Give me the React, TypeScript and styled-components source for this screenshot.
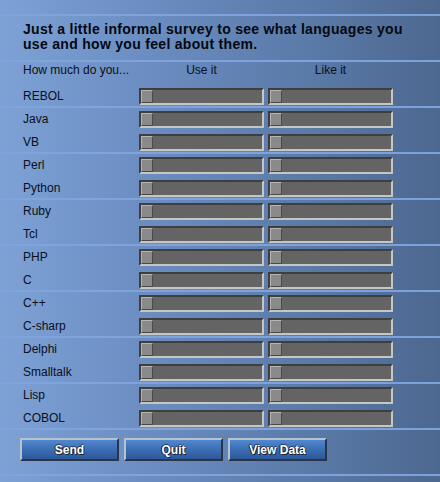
import React from "react";
import styled, { createGlobalStyle } from "styled-components";

const Global = createGlobalStyle`
  html, body { margin: 0; padding: 0; }
  body { width: 440px; height: 482px; overflow: hidden; }
`;

const Page = styled.div`
  box-sizing: border-box;
  width: 440px;
  height: 482px;
  padding: 22px 0 0 23px;
  font-family: "Liberation Sans", Arial, sans-serif;
  color: #0a0f1a;
  background:
    repeating-linear-gradient(
      to bottom,
      transparent 0px,
      transparent 14px,
      rgba(128, 164, 222, 0.95) 14px,
      rgba(128, 164, 222, 0.95) 16px,
      transparent 16px,
      transparent 46px
    ),
    linear-gradient(to right, #7ea2d6 0%, #6a8cc0 35%, #5a7aa8 70%, #4d6890 100%);
`;

const Title = styled.h1`
  margin: 0;
  font-size: 14px;
  line-height: 15px;
  font-weight: bold;
  letter-spacing: 0.3px;
  color: #05080f;
`;

const Grid = styled.div`
  display: grid;
  grid-template-columns: 112px 125px 125px;
  column-gap: 4px;
  margin-top: 7px;
`;

const HeadCell = styled.div<{ $center?: boolean }>`
  height: 23px;
  line-height: 23px;
  font-size: 12px;
  text-align: ${(p) => (p.$center ? "center" : "left")};
  white-space: nowrap;
  margin-bottom: 3px;
`;

const Label = styled.div`
  height: 23px;
  line-height: 23px;
  font-size: 12px;
  white-space: nowrap;
`;

const SliderCell = styled.div`
  height: 23px;
  display: flex;
  align-items: center;
`;

const Track = styled.div`
  box-sizing: border-box;
  width: 125px;
  height: 17px;
  background: #646464;
  border-top: 2px solid #3e3e3e;
  border-left: 2px solid #3e3e3e;
  border-bottom: 2px solid #c6c6c2;
  border-right: 2px solid #c6c6c2;
  display: flex;
  align-items: flex-start;
`;

const Knob = styled.div`
  box-sizing: border-box;
  width: 12px;
  height: 13px;
  background: #8a8a8a;
  border-top: 1px solid #b4b4b4;
  border-left: 1px solid #b4b4b4;
  border-bottom: 1px solid #4a4a4a;
  border-right: 1px solid #4a4a4a;
`;

const Buttons = styled.div`
  display: flex;
  gap: 5px;
  margin: 8px 0 0 -3px;
`;

const Button = styled.button`
  box-sizing: border-box;
  width: 99px;
  height: 23px;
  padding: 0;
  font-family: "Liberation Sans", Arial, sans-serif;
  font-size: 12px;
  font-weight: bold;
  color: #ffffff;
  text-shadow: 1px 1px 0 #1a2438, -1px 0 0 #1a2438, 0 -1px 0 #2a3a58;
  background: linear-gradient(to bottom, #5088d0 0%, #3e70b6 45%, #2c5898 100%);
  border-top: 2px solid #b6c2cc;
  border-left: 2px solid #b6c2cc;
  border-bottom: 2px solid #2a3446;
  border-right: 2px solid #2a3446;
  cursor: pointer;
`;

const languages = [
  "REBOL", "Java", "VB", "Perl", "Python", "Ruby", "Tcl", "PHP", "C", "C++",
  "C-sharp", "Delphi", "Smalltalk", "Lisp", "COBOL",
];

const Slider: React.FC = () => (
  <SliderCell>
    <Track>
      <Knob />
    </Track>
  </SliderCell>
);

export default function App() {
  return (
    <>
      <Global />
      <Page>
        <Title>
          Just a little informal survey to see what languages you
          <br />
          use and how you feel about them.
        </Title>
        <Grid>
          <HeadCell>How much do you...</HeadCell>
          <HeadCell $center>Use it</HeadCell>
          <HeadCell $center>Like it</HeadCell>
          {languages.map((l) => (
            <React.Fragment key={l}>
              <Label>{l}</Label>
              <Slider />
              <Slider />
            </React.Fragment>
          ))}
        </Grid>
        <Buttons>
          <Button>Send</Button>
          <Button>Quit</Button>
          <Button>View Data</Button>
        </Buttons>
      </Page>
    </>
  );
}
